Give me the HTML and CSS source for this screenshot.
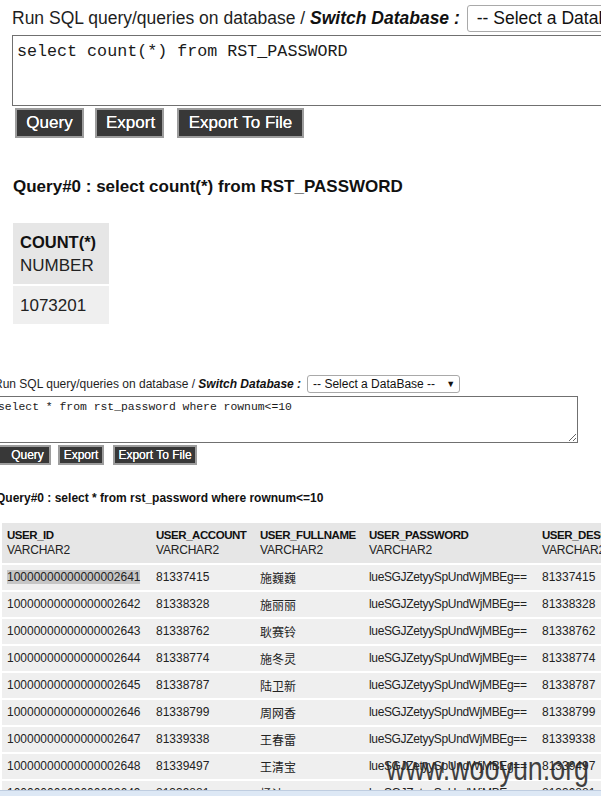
FILE: index.html
```html
<!DOCTYPE html>
<html>
<head>
<meta charset="utf-8">
<link rel="stylesheet" href="styles.css">
</head>
<body>
<div class="page">
  <section class="qp qp-top">
    <div class="dbline">
      <span class="lbl">Run SQL query/queries on database / <b><i>Switch Database :</i></b></span>
      <div class="sel">-- Select a DataBase --<span class="arr">&#9660;</span></div>
    </div>
    <textarea class="sql" spellcheck="false">select count(*) from RST_PASSWORD</textarea>
    <div class="btns">
      <button class="btn b-query">Query</button>
      <button class="btn b-export">Export</button>
      <button class="btn b-file">Export To File</button>
    </div>
    <h3 class="qh">Query#0 : select count(*) from RST_PASSWORD</h3>
    <table class="res">
      <thead>
        <tr><th class="c-count">COUNT(*)<br><span class="type">NUMBER</span></th></tr>
      </thead>
      <tbody>
        <tr><td>1073201</td></tr>
      </tbody>
    </table>
  </section>

  <section class="qp qp-bot">
    <div class="dbline">
      <span class="lbl">Run SQL query/queries on database / <b><i>Switch Database :</i></b></span>
      <div class="sel">-- Select a DataBase --<span class="arr">&#9660;</span></div>
    </div>
    <textarea class="sql" spellcheck="false">select * from rst_password where rownum&lt;=10</textarea>
    <div class="btns">
      <button class="btn b-query">Query</button>
      <button class="btn b-export">Export</button>
      <button class="btn b-file">Export To File</button>
    </div>
    <h3 class="qh">Query#0 : select * from rst_password where rownum&lt;=10</h3>
    <table class="res">
      <thead>
        <tr>
          <th class="c1">USER_ID<br><span class="type">VARCHAR2</span></th>
          <th class="c2">USER_ACCOUNT<br><span class="type">VARCHAR2</span></th>
          <th class="c3">USER_FULLNAME<br><span class="type">VARCHAR2</span></th>
          <th class="c4">USER_PASSWORD<br><span class="type">VARCHAR2</span></th>
          <th class="c5">USER_DESC<br><span class="type">VARCHAR2</span></th>
        </tr>
      </thead>
      <tbody>
        <tr><td><span class="hl">10000000000000002641</span></td><td>81337415</td><td class="cjk">施巍巍</td><td class="pw">lueSGJZetyySpUndWjMBEg==</td><td>81337415</td></tr>
        <tr><td>10000000000000002642</td><td>81338328</td><td class="cjk">施丽丽</td><td class="pw">lueSGJZetyySpUndWjMBEg==</td><td>81338328</td></tr>
        <tr><td>10000000000000002643</td><td>81338762</td><td class="cjk">耿赛铃</td><td class="pw">lueSGJZetyySpUndWjMBEg==</td><td>81338762</td></tr>
        <tr><td>10000000000000002644</td><td>81338774</td><td class="cjk">施冬灵</td><td class="pw">lueSGJZetyySpUndWjMBEg==</td><td>81338774</td></tr>
        <tr><td>10000000000000002645</td><td>81338787</td><td class="cjk">陆卫新</td><td class="pw">lueSGJZetyySpUndWjMBEg==</td><td>81338787</td></tr>
        <tr><td>10000000000000002646</td><td>81338799</td><td class="cjk">周网香</td><td class="pw">lueSGJZetyySpUndWjMBEg==</td><td>81338799</td></tr>
        <tr><td>10000000000000002647</td><td>81339338</td><td class="cjk">王春雷</td><td class="pw">lueSGJZetyySpUndWjMBEg==</td><td>81339338</td></tr>
        <tr><td>10000000000000002648</td><td>81339497</td><td class="cjk">王清宝</td><td class="pw">lueSGJZetyySpUndWjMBEg==</td><td>81339497</td></tr>
        <tr><td>10000000000000002649</td><td>81339881</td><td class="cjk">杨洁</td><td class="pw">lueSGJZetyySpUndWjMBEg==</td><td>81339881</td></tr>
      </tbody>
    </table>
  </section>

  <div class="wm">www.wooyun.org</div>
  <div class="status"></div>
</div>
</body>
</html>
```

FILE: styles.css
```css
html, body {
  margin: 0;
  padding: 0;
  background: #ffffff;
}
.page {
  position: relative;
  width: 601px;
  height: 796px;
  overflow: hidden;
  font-family: "Liberation Sans", Arial, "Noto Sans CJK SC", sans-serif;
  color: #1e1e1e;
}
.qp {
  display: flex;
  flex-direction: column;
  align-items: flex-start;
}
.dbline {
  display: flex;
  align-items: center;
  white-space: nowrap;
}
.lbl b i {
  color: #111;
}
.sel {
  display: flex;
  align-items: center;
  box-sizing: border-box;
  border: 1px solid #a9a9a9;
  border-radius: 3px;
  background: #fff;
  white-space: nowrap;
  flex-shrink: 0;
  color: #111;
}
.arr {
  margin-left: auto;
}
.sql {
  display: block;
  box-sizing: border-box;
  border: 1px solid #707070;
  font-family: "Liberation Mono", "Courier New", monospace;
  color: #1a1a1a;
  background: #fff;
  margin: 0;
  outline: none;
}
.btns {
  display: flex;
}
.btn {
  box-sizing: border-box;
  background: #383838;
  color: #fff;
  border: 2px solid #9d9d9d;
  font-family: "Liberation Sans", Arial, sans-serif;
  text-shadow: 0 0 0.4px #fff;
  margin: 0;
  padding: 0;
}
.qh {
  margin: 0;
  font-weight: bold;
  color: #111;
  white-space: nowrap;
}
.res {
  border-collapse: separate;
  border-spacing: 0 2px;
  text-align: left;
}
.res th {
  background: #e6e6e6;
  font-weight: bold;
  color: #111;
  vertical-align: top;
  white-space: nowrap;
}
.res th .type {
  font-weight: normal;
  color: #222;
}
.res td {
  background: #efefef;
  color: #222;
  white-space: nowrap;
}
.cjk {
  font-family: "Noto Sans CJK SC", sans-serif;
}
.hl {
  background: #c6c6c6;
}

/* ---------- top panel (larger zoom) ---------- */
.qp-top {
  padding: 5px 0 0 12px;
}
.qp-top .dbline {
  height: 27px;
  gap: 7px;
}
.qp-top .lbl {
  font-size: 17.5px;
}
.qp-top .sel {
  width: 230px;
  height: 27px;
  padding-left: 9px;
  font-size: 17.5px;
}
.qp-top .sql {
  margin-top: 3px;
  width: 640px;
  height: 71px;
  padding: 6px 4px 2px;
  font-size: 16.7px;
  line-height: 19px;
  resize: none;
}
.qp-top .btns {
  margin-top: 2px;
  margin-left: 3px;
}
.qp-top .btn {
  height: 30px;
  font-size: 17px;
  padding: 0 9px;
}
.qp-top .b-query { width: 69px; }
.qp-top .b-export { width: 69px; margin-left: 11px; }
.qp-top .b-file { width: 127px; margin-left: 13px; }
.qp-top .qh {
  margin-top: 38px;
  margin-left: 1px;
  font-size: 17px;
  line-height: 21px;
}
.qp-top .res {
  margin-top: 24px;
  margin-left: 1px;
  font-size: 17px;
  line-height: 23px;
}
.qp-top .res th {
  font-size: 16.5px;
}
.qp-top .res th .type {
  font-size: 17px;
}
.qp-top .res th,
.qp-top .res td {
  padding: 7.5px 7px;
}
.qp-top .c-count {
  width: 82px;
}

/* ---------- bottom panel (smaller zoom) ---------- */
.qp-bot {
  margin-top: 49px;
  margin-left: -6px;
}
.qp-bot .dbline {
  height: 18px;
  gap: 6px;
}
.qp-bot .lbl {
  font-size: 12px;
}
.qp-bot .sel {
  width: 153px;
  height: 18px;
  padding: 0 4px 0 5px;
  font-size: 12px;
}
.qp-bot .arr {
  font-size: 9px;
}
.qp-bot .sql {
  margin-top: 3px;
  margin-left: 1px;
  width: 583px;
  height: 47px;
  padding: 4px 2px 1px;
  font-size: 11.4px;
  line-height: 13px;
}
.qp-bot .btns {
  margin-top: 2px;
  margin-left: 4px;
}
.qp-bot .btn {
  height: 20px;
  font-size: 12px;
}
.qp-bot .b-query { width: 53px; padding-left: 6px; }
.qp-bot .b-export { width: 46px; margin-left: 7px; }
.qp-bot .b-file { width: 84px; margin-left: 9px; }
.qp-bot .qh {
  margin-top: 26px;
  margin-left: 2px;
  font-size: 12px;
  line-height: 14px;
}
.qp-bot .res {
  margin-top: 16px;
  margin-left: 8px;
  font-size: 12px;
  line-height: 15px;
  table-layout: fixed;
  width: 640px;
}
.qp-bot .res th {
  font-size: 11.5px;
  letter-spacing: -0.45px;
}
.qp-bot .res th .type {
  font-size: 12px;
  letter-spacing: -0.2px;
}
.qp-bot .res th,
.qp-bot .res td {
  padding: 5px 5px;
  overflow: hidden;
}
.qp-bot .res td.pw {
  letter-spacing: -0.35px;
}
.qp-bot .c1 { width: 139px; }
.qp-bot .c2 { width: 94px; }
.qp-bot .c3 { width: 99px; }
.qp-bot .c4 { width: 163px; }

/* ---------- overlays ---------- */
.wm {
  position: absolute;
  left: 386px;
  top: 751px;
  font-family: "Liberation Sans", Arial, sans-serif;
  font-size: 34px;
  line-height: 34px;
  color: rgba(40, 40, 40, 0.88);
  transform: scaleX(0.79);
  transform-origin: left top;
  white-space: nowrap;
}
.status {
  position: absolute;
  left: 0;
  right: 0;
  bottom: 0;
  height: 5px;
  background: #dde8f5;
  border-top: 1px solid #bfcde0;
}
```
